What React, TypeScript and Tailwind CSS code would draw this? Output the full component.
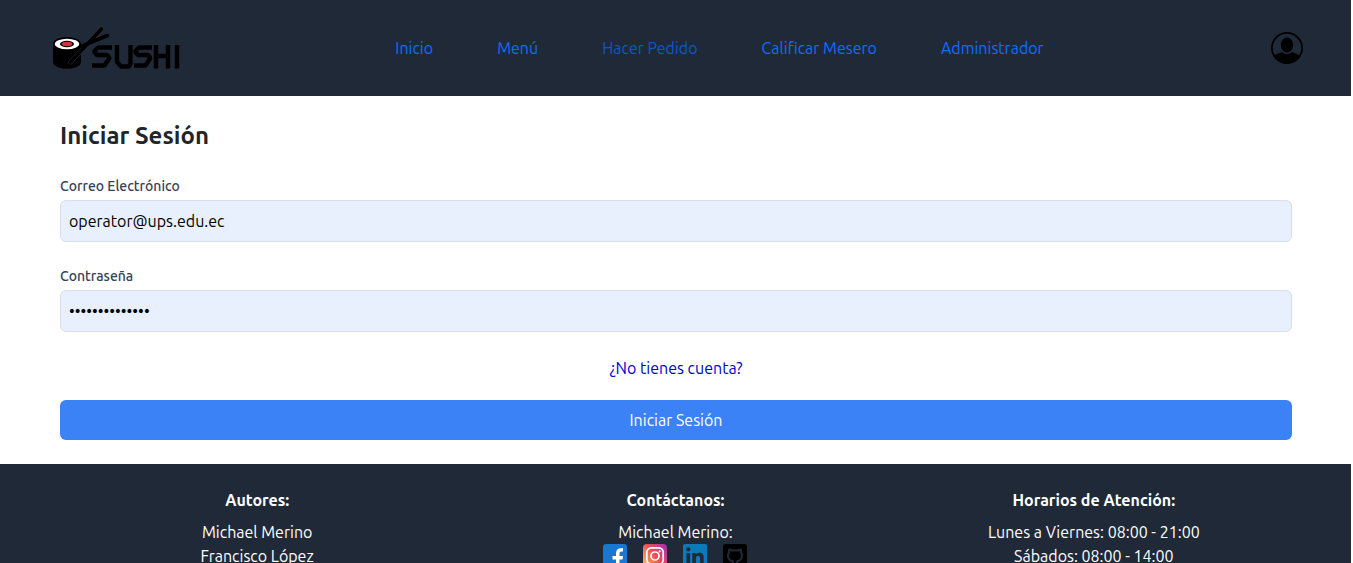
import { useState } from "react";
import type { ReactNode } from "react";

const links = [
  { label: "Inicio", tone: "text-[#0d6efd]" },
  { label: "Menú", tone: "text-[#0d6efd]" },
  { label: "Hacer Pedido", tone: "text-[#0a58ca]" },
  { label: "Calificar Mesero", tone: "text-[#0d6efd]" },
  { label: "Administrador", tone: "text-[#0d6efd]" },
];

function Logo() {
  return (
    <svg viewBox="0 0 132 48" className="h-12 w-[132px]" role="img" aria-label="Sushi">
      <path d="M5 20v18c0 9 28 9 28 0V20z" fill="#000" />
      <ellipse cx="19" cy="20" rx="14" ry="7" fill="#000" />
      <ellipse cx="19" cy="20" rx="12.2" ry="5.2" fill="#fff" />
      <ellipse cx="19" cy="20" rx="7" ry="3.2" fill="#000" />
      <ellipse cx="19" cy="20" rx="5.2" ry="2.2" fill="#dc2f3c" />
      <path d="M22.500 38 53.500 5" stroke="#293341" strokeWidth="4.600" strokeLinecap="round" />
      <path d="M22.500 38 53.500 5" stroke="#000" strokeWidth="3.600" strokeLinecap="round" />
      <path d="M34 22 59.500 11.500" stroke="#000" strokeWidth="3.600" strokeLinecap="round" />
      <g fill="none" stroke="#000" strokeWidth="4.400" strokeLinejoin="bevel">
        <path d="M64 23.500H50l-4 4 3 3.500h10l2.500 3-5 7.500H44" />
        <path d="M69 21v17l4 4.500h8l1.500-3V21" />
        <path d="M104 23.500H91l-4 4 3 3.500h10l2.500 3-5 7.500H86" />
        <path d="M108 21v23.500M120 21v23.500M106 32h16M129 21v23.500" />
      </g>
    </svg>
  );
}

function Avatar() {
  return (
    <svg viewBox="0 0 32 32" className="size-8" aria-hidden="true">
      <circle cx="16" cy="16" r="15.1" fill="none" stroke="#000" strokeWidth="1.8" />
      <ellipse cx="16" cy="13" rx="6.2" ry="7.4" fill="#000" />
      <path d="M3 24c2-2 5-2.600 8-4 3 2.700 7 2.700 10 0 3 1.400 6 2 8 4-3 5-8 7.500-13 7.500S6 29 3 24z" fill="#000" />
    </svg>
  );
}

function Social({ label, children }: { label: string; children: ReactNode }) {
  return (
    <a href="#" aria-label={label}>
      <svg viewBox="0 0 24 24" className="size-6" aria-hidden="true">
        {children}
      </svg>
    </a>
  );
}

function Field({ id, label, type, initial }: { id: string; label: string; type: string; initial: string }) {
  const [value, setValue] = useState(initial);
  return (
    <div className="mb-6">
      <label htmlFor={id} className="block text-sm font-medium text-gray-700">
        {label}
      </label>
      <input
        id={id}
        type={type}
        value={value}
        onChange={(e) => setValue(e.target.value)}
        className="mt-1 block w-full rounded-md border border-[#d9dfe8] bg-[#e8f0fe] p-2 text-base text-black"
      />
    </div>
  );
}

export default function App() {
  return (
    <div className="mr-0.5 min-h-screen bg-white font-['Ubuntu','Noto_Sans',sans-serif] text-base text-[#212529]">
      <header className="flex h-24 items-center bg-[#202937] px-12">
        <a href="#">
          <Logo />
        </a>
        <nav className="flex flex-1 justify-center gap-16 pr-3">
          {links.map((l) => (
            <a key={l.label} href="#" className={l.tone}>
              {l.label}
            </a>
          ))}
        </nav>
        <button type="button" aria-label="Cuenta">
          <Avatar />
        </button>
      </header>

      <main className="py-6 pr-[59px] pl-[60px]">
        <h1 className="mb-6 text-2xl font-bold">Iniciar Sesión</h1>
        <form onSubmit={(e) => e.preventDefault()}>
          <Field id="email" label="Correo Electrónico" type="email" initial="operator@ups.edu.ec" />
          <Field id="password" label="Contraseña" type="password" initial="contrasena1234" />
          <div className="mb-5 text-center">
            <a href="#" className="text-[#0000cd]">
              ¿No tienes cuenta?
            </a>
          </div>
          <button type="submit" className="block w-full rounded-md bg-[#3b82f6] py-2 text-white">
            Iniciar Sesión
          </button>
        </form>
      </main>

      <footer className="grid grid-cols-3 bg-[#202937] px-12 py-6 text-center text-white">
        <section>
          <h2 className="mb-2 font-bold">Autores:</h2>
          <p>Michael Merino</p>
          <p>Francisco López</p>
        </section>
        <section>
          <h2 className="mb-2 font-bold">Contáctanos:</h2>
          <p>Michael Merino:</p>
          <div className="flex justify-center gap-4">
            <Social label="Facebook">
              <rect width="24" height="24" rx="3" fill="#1877d2" />
              <path d="M13 24v-8.500H9.500V12H13V9.500C13 6 14.800 4.200 18 4.200h2v3.300h-1.500c-1.500 0-2 .7-2 2V12H20l-.5 3.500h-3V24z" fill="#fff" />
            </Social>
            <Social label="Instagram">
              <defs>
                <linearGradient id="ig" x1="0" y1=".8" x2="1" y2=".1">
                  <stop offset="0" stopColor="#fdb64e" />
                  <stop offset=".5" stopColor="#ee4c55" />
                  <stop offset="1" stopColor="#a530b8" />
                </linearGradient>
              </defs>
              <rect width="24" height="24" rx="4" fill="url(#ig)" />
              <g fill="none" stroke="#fff" strokeWidth="1.7">
                <rect x="3.800" y="3.800" width="16.400" height="16.400" rx="4.500" />
                <circle cx="12" cy="12" r="4" />
              </g>
              <circle cx="16.700" cy="7.300" r="1.100" fill="#fff" />
            </Social>
            <Social label="LinkedIn">
              <rect width="24" height="24" rx="2" fill="#0a7ab8" />
              <g fill="#202937">
                <circle cx="5.300" cy="5.300" r="2.100" />
                <path d="M3.500 9h3.600v11.500H3.500zM9.300 9h3.400v1.600c.8-1.200 2-1.900 3.600-1.900 3.300 0 4.400 2 4.400 5.300v6.500h-3.600v-6c0-1.700-.5-2.700-1.900-2.700-1.600 0-2.300 1.100-2.300 2.800v5.900H9.300z" />
              </g>
            </Social>
            <Social label="GitHub">
              <rect width="24" height="24" rx="3" fill="#000" />
              <path
                d="M9.800 20v-2.600c-3-1-4.800-3-4.800-5.900 0-1.200.4-2.200 1.100-3.100-.3-1-.2-2 .2-3 1.100 0 2 .5 2.900 1.200 1.800-.5 3.800-.5 5.600 0 .9-.7 1.800-1.200 2.900-1.200.4 1 .5 2 .2 3 .7.900 1.100 1.900 1.100 3.100 0 2.900-1.800 4.900-4.800 5.900V20"
                fill="none"
                stroke="#202937"
                strokeWidth="2"
              />
            </Social>
          </div>
        </section>
        <section>
          <h2 className="mb-2 font-bold">Horarios de Atención:</h2>
          <p>Lunes a Viernes: 08:00 - 21:00</p>
          <p>Sábados: 08:00 - 14:00</p>
        </section>
      </footer>
    </div>
  );
}
